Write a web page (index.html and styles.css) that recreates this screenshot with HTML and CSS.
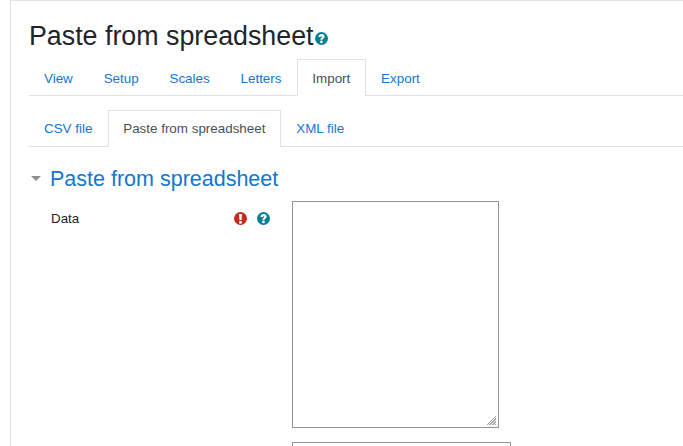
FILE: index.html
```html
<!DOCTYPE html>
<html lang="en">
<head>
<meta charset="utf-8">
<title>Paste from spreadsheet</title>
<link rel="stylesheet" href="styles.css">
</head>
<body>
<main class="card">
  <h1 class="title">Paste from spreadsheet<svg class="icon icon-title" viewBox="0 0 24 24"><use href="#help"/></svg></h1>
  <nav class="tabs tabs-main">
    <a class="tab">View</a><a class="tab">Setup</a><a class="tab">Scales</a><a class="tab">Letters</a><a class="tab active">Import</a><a class="tab">Export</a>
  </nav>
  <nav class="tabs tabs-sub">
    <a class="tab">CSV file</a><a class="tab active">Paste from spreadsheet</a><a class="tab">XML file</a>
  </nav>
  <section class="section">
    <h2 class="legend"><span class="caret"></span>Paste from spreadsheet</h2>
    <div class="row">
      <div class="label-col">
        <label class="label">Data</label>
        <span class="icons">
          <svg class="icon" viewBox="0 0 24 24"><circle cx="12" cy="12" r="12" fill="#c9281c"/><path d="M9.200 3.800h5.600l-.8 11h-4zM12 16a2.800 2.800 0 1 1 0 5.600 2.800 2.800 0 0 1 0-5.600z" fill="#fff"/></svg>
          <svg class="icon" viewBox="0 0 24 24"><use href="#help"/></svg>
        </span>
      </div>
      <textarea class="area"></textarea>
    </div>
    <div class="next-field"></div>
  </section>
</main>
<svg class="defs" width="0" height="0">
  <symbol id="help" viewBox="0 0 24 24">
    <circle cx="12" cy="12" r="12" fill="#0a7f94"/>
    <path d="M6.400 9C6.700 5.700 9 3.800 12.300 3.800c3.100 0 5.500 1.900 5.500 4.700 0 2.200-1.300 3.100-2.600 4-.8.500-1.200 1-1.200 2H10c0-2 .7-3.100 2-4 .9-.6 1.400-1 1.400-1.700 0-.7-.5-1.100-1.300-1.100-.9 0-1.400.600-1.500 1.700zM11.900 15.800a2.500 2.500 0 1 1 0 5 2.500 2.500 0 0 1 0-5z" fill="#fff"/>
  </symbol>
</svg>
</body>
</html>
```
FILE: styles.css
```css
html, body {
  margin: 0;
  height: 100%;
  overflow: hidden;
  background: #fff;
}
body {
  font-family: "Liberation Sans", Arial, sans-serif;
  font-size: 13.33px;
  color: #373a3c;
  padding-left: 10px;
}
.card {
  border: 1px solid #dee2e6;
  border-right: 0;
  border-bottom: 0;
  padding: 18px 0 0 18px;
  min-height: 100%;
  width: 673px;
  box-sizing: border-box;
  overflow: hidden;
}
.title {
  margin: 0;
  font-size: 26.8px;
  font-weight: 400;
  line-height: 34px;
  color: #212529;
  height: 40px;
}
.icon {
  width: 13px;
  height: 13px;
  display: block;
}
.icon-title {
  display: inline-block;
  margin-left: 1px;
  vertical-align: 0;
}
.tabs {
  display: flex;
  border-bottom: 1px solid #dee2e6;
  height: 36px;
}
.tabs-main {
  margin-bottom: 14px;
}
.tab {
  box-sizing: border-box;
  height: 37px;
  padding: 0 14.85px 0 14px;
  font-size: 13.4px;
  line-height: 36px;
  color: #1177d1;
  border: 1px solid transparent;
  border-bottom: 0;
}
.tabs-main .tab {
  line-height: 38px;
}
.tab.active {
  color: #495057;
  background: #fff;
  border-color: #dee2e6;
  position: relative;
}
.section {
  padding-top: 16px;
}
.legend {
  margin: 0 0 6px;
  font-size: 21.5px;
  font-weight: 400;
  line-height: 32px;
  color: #1177d1;
  display: flex;
  align-items: center;
}
.caret {
  width: 0;
  height: 0;
  margin: 0 9px 0 2px;
  border-left: 5px solid transparent;
  border-right: 5px solid transparent;
  border-top: 5px solid #8e8e8e;
  position: relative;
  top: -1px;
}
.row {
  display: flex;
}
.label-col {
  width: 263px;
  display: flex;
  justify-content: space-between;
  padding: 9px 0 0 22px;
  box-sizing: border-box;
}
.label {
  color: #212529;
  line-height: 17px;
}
.icons {
  display: flex;
  gap: 10px;
  margin-right: 22px;
  padding-top: 2px;
}
.area {
  display: block;
  box-sizing: border-box;
  width: 207px;
  height: 227px;
  margin: 0;
  padding: 0;
  border: 1px solid #8f959e;
  border-radius: 0;
  background: #fff;
  resize: both;
  outline: 0;
}
.area::-webkit-resizer {
  background:
    linear-gradient(135deg, #fff 50%, transparent 50%) 1px 1px / 12px 12px no-repeat,
    repeating-linear-gradient(135deg, #a3a3a3 0 1px, #fff 1px 2px) 1px 1px / 12px 12px no-repeat;
}
.next-field {
  margin: 14px 0 0 263px;
  width: 219px;
  height: 30px;
  box-sizing: border-box;
  border: 1px solid #8f959e;
}
.defs {
  position: absolute;
}
```
